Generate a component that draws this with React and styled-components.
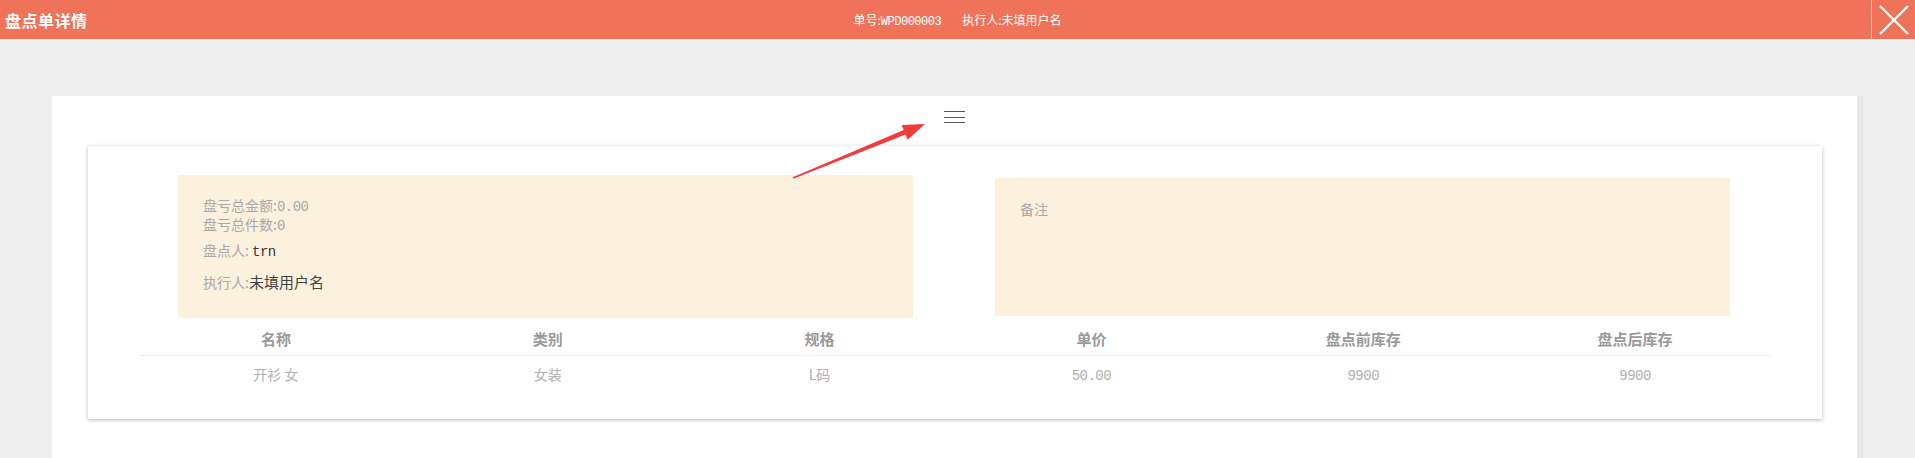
import React from 'react';
import styled, { createGlobalStyle } from 'styled-components';

const GlobalStyle = createGlobalStyle`
  body {
    margin: 0;
    background: #eeeeee;
    font-family: "Noto Sans CJK SC", "Liberation Sans", sans-serif;
  }
`;

const Header = styled.header`
  display: grid;
  grid-template-columns: 1fr auto 1fr;
  align-items: center;
  height: 39px;
  background: #ef7358;
  color: #fff;
`;

const Title = styled.h1`
  margin: 0;
  padding-left: 5px;
  font-size: 16px;
  font-weight: 700;
  letter-spacing: 0.5px;
`;

const HeaderInfo = styled.div`
  display: flex;
  gap: 21px;
  font-size: 12px;
`;

const Mono = styled.span`
  font-family: "Liberation Mono", "Noto Sans CJK SC", monospace;
  font-size: ${p => p.size || 12}px;
  letter-spacing: -0.5px;
`;

const CloseButton = styled.button`
  justify-self: end;
  display: flex;
  align-items: center;
  justify-content: center;
  width: 44px;
  height: 39px;
  padding: 0;
  background: transparent;
  border: none;
  border-left: 1px solid rgba(255, 255, 255, 0.75);
  cursor: pointer;
`;

const Page = styled.main`
  padding: 57px 52px 0 52px;
`;

const Panel = styled.section`
  position: relative;
  min-height: 362px;
  background: #fff;
  border-right: 6px solid #e7e7e7;
  padding-top: 15px;
  box-sizing: border-box;
`;

const MenuToggle = styled.div`
  display: flex;
  flex-direction: column;
  justify-content: space-between;
  width: 21px;
  height: 12px;
  margin: 0 auto 23px;
  span {
    display: block;
    height: 1px;
    background: #555;
  }
`;

const Card = styled.div`
  margin: 0 35px 0 36px;
  padding: 29px 0 35px;
  background: #fff;
  box-shadow: 0 1px 4px rgba(0, 0, 0, 0.28);
`;

const InfoRow = styled.div`
  display: grid;
  grid-template-columns: 1fr 1fr;
  column-gap: 82px;
  align-items: start;
  padding: 0 92px 0 90px;
`;

const NoteBox = styled.div`
  background: #fcf1dc;
  padding: 21px 25px 0;
  font-size: 14px;
  color: #a9a9a9;
  box-sizing: border-box;
  margin-top: ${p => p.offset || 0}px;
  height: ${p => p.height}px;
`;

const Line = styled.div`
  height: ${p => p.lh || 19}px;
  line-height: ${p => p.lh || 19}px;
  margin-top: ${p => p.gap || 0}px;
  white-space: pre;
`;

const Value = styled.span`
  color: ${p => p.color || '#444'};
  font-size: ${p => p.size || 14}px;
`;

const Table = styled.div`
  margin: 0 51px 0 52px;
`;

const Row = styled.div`
  display: grid;
  grid-template-columns: repeat(6, 1fr);
  text-align: center;
  height: 20px;
  line-height: 20px;
  padding: ${p => (p.head ? '11px 0 6px' : '8px 0 0')};
  border-bottom: ${p => (p.head ? '1px solid #ebebeb' : 'none')};
  font-size: ${p => (p.head ? 15 : 14)}px;
  font-weight: ${p => (p.head ? 700 : 400)};
  color: ${p => (p.head ? '#9a9a9a' : '#b0b0b0')};
`;

const Arrow = styled.svg`
  position: absolute;
  left: 735px;
  top: 20px;
  pointer-events: none;
`;

const columns = ['名称', '类别', '规格', '单价', '盘点前库存', '盘点后库存'];
const items = [
  { name: '开衫 女', category: '女装', spec: 'L码', price: '50.00', before: '9900', after: '9900' },
];

export default function App() {
  return (
    <>
      <GlobalStyle />
      <Header>
        <Title>盘点单详情</Title>
        <HeaderInfo>
          <span>单号:<Mono>WPD000003</Mono></span>
          <span>执行人:未填用户名</span>
        </HeaderInfo>
        <CloseButton aria-label="关闭">
          <svg width="30" height="30" viewBox="0 0 30 30">
            <path d="M1 1 L29 29 M29 1 L1 29" stroke="#fff" strokeWidth="2.4" />
          </svg>
        </CloseButton>
      </Header>
      <Page>
        <Panel>
          <MenuToggle>
            <span />
            <span />
            <span />
          </MenuToggle>
          <Arrow width="150" height="70" viewBox="0 0 150 70">
            <path
              d="M5.7 61.3 L116.7 14.0 L114.6 8.9 L138 8 L120.6 23.7 L118.5 18.6 L6.3 62.7 Z"
              fill="#f23b3b"
            />
          </Arrow>
          <Card>
            <InfoRow>
              <NoteBox height={143}>
                <Line>盘亏总金额:<Mono size={14}>0.00</Mono></Line>
                <Line>盘亏总件数:<Mono size={14}>0</Mono></Line>
                <Line lh={20} gap={6}>
                  盘点人: <Value color="#333"><Mono size={14}>trn</Mono></Value>
                </Line>
                <Line lh={20} gap={12}>
                  执行人:<Value size={15}>未填用户名</Value>
                </Line>
              </NoteBox>
              <NoteBox offset={3} height={138}>
                <Line lh={20}>备注</Line>
              </NoteBox>
            </InfoRow>
            <Table>
              <Row head>
                {columns.map(c => <div key={c}>{c}</div>)}
              </Row>
              {items.map(item => (
                <Row key={item.name}>
                  <div>{item.name}</div>
                  <div>{item.category}</div>
                  <div>{item.spec}</div>
                  <div><Mono size={14}>{item.price}</Mono></div>
                  <div><Mono size={14}>{item.before}</Mono></div>
                  <div><Mono size={14}>{item.after}</Mono></div>
                </Row>
              ))}
            </Table>
          </Card>
        </Panel>
      </Page>
    </>
  );
}
